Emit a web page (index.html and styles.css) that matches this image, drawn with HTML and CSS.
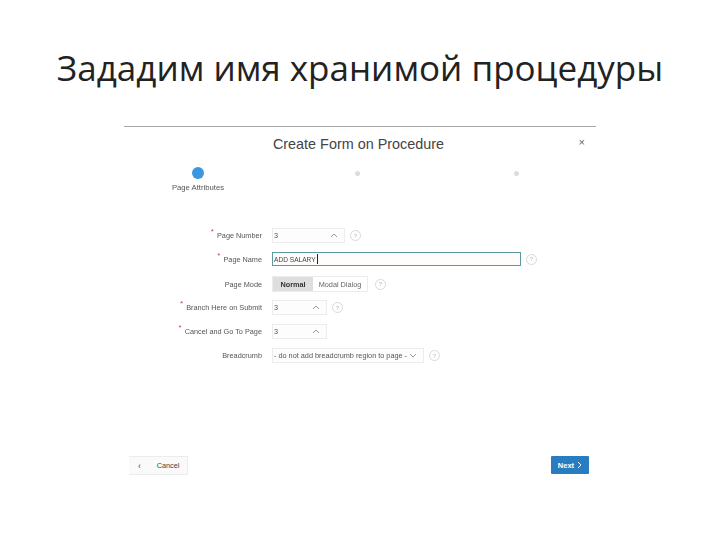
FILE: index.html
```html
<!DOCTYPE html>
<html lang="en">
  <head>
    <meta charset="UTF-8" />
    <title>Зададим имя хранимой процедуры</title>
    <link rel="stylesheet" href="styles.css">
  </head>
  <body>
    <div class="slide">
      <h1 class="slide-title">Зададим имя хранимой процедуры</h1>

      <div class="dialog">
        <div class="dialog-header">
          <div class="dialog-title">Create Form on Procedure</div>
          <div class="dialog-close">×</div>
        </div>

        <div class="wizard">
          <div class="step active">
            <span class="dot"></span>
            <span class="step-label">Page Attributes</span>
          </div>
          <div class="step"><span class="dot"></span></div>
          <div class="step"><span class="dot"></span></div>
        </div>

        <div class="form">
          <div class="row row-number">
            <label class="req">Page Number</label>
            <div class="field w-73">
              <span>3</span>
              <svg class="caret" viewBox="0 0 8 5"><polyline points="1,4 4,1 7,4" /></svg>
            </div>
            <span class="help">?</span>
          </div>
          <div class="row row-name">
            <label class="req">Page Name</label>
            <div class="field input-active w-249"><span>ADD SALARY</span><span class="cursor"></span></div>
            <span class="help">?</span>
          </div>
          <div class="row row-mode">
            <label>Page Mode</label>
            <div class="segmented">
              <span class="seg on">Normal</span>
              <span class="seg">Modal Dialog</span>
            </div>
            <span class="help help-wide">?</span>
          </div>
          <div class="row row-branch">
            <label class="req">Branch Here on Submit</label>
            <div class="field w-55">
              <span>3</span>
              <svg class="caret" viewBox="0 0 8 5"><polyline points="1,4 4,1 7,4" /></svg>
            </div>
            <span class="help">?</span>
          </div>
          <div class="row row-cancel">
            <label class="req">Cancel and Go To Page</label>
            <div class="field w-55">
              <span>3</span>
              <svg class="caret" viewBox="0 0 8 5"><polyline points="1,4 4,1 7,4" /></svg>
            </div>
          </div>
          <div class="row row-crumb">
            <label>Breadcrumb</label>
            <div class="field w-152">
              <span>- do not add breadcrumb region to page -</span>
              <svg class="caret" viewBox="0 0 8 5"><polyline points="1,1 4,4 7,1" /></svg>
            </div>
            <span class="help">?</span>
          </div>
        </div>

        <div class="dialog-footer">
          <div class="btn-group">
            <span class="btn btn-back">‹</span>
            <span class="btn btn-cancel">Cancel</span>
          </div>
          <span class="btn-next">
            Next
            <svg class="next-arrow" viewBox="0 0 5 8"><polyline points="1,1 4,4 1,7" /></svg>
          </span>
        </div>
      </div>
    </div>
  </body>
</html>
```

FILE: styles.css
```css
body {
  margin: 0;
  background: #fff;
  color: #333;
  font-family: "Liberation Sans", Arial, sans-serif;
}
.slide {
  width: 720px;
  height: 540px;
  overflow: hidden;
}
.slide-title {
  margin: 0;
  padding-top: 45px;
  height: 126px;
  box-sizing: border-box;
  text-align: center;
  font-family: "Open Sans", sans-serif;
  font-size: 35px;
  font-weight: 400;
  line-height: 46px;
  color: #222;
  white-space: nowrap;
}
.dialog {
  width: 472px;
  margin-left: 124px;
  border-top: 1px solid #a8a8a8;
}
.dialog-header {
  display: flex;
  justify-content: center;
  align-items: center;
  height: 33px;
  padding-right: 3px;
  position: relative;
}
.dialog-title {
  font-size: 14.4px;
  color: #444;
}
.dialog-close {
  position: absolute;
  right: 11px;
  top: 9px;
  font-size: 11px;
  color: #666;
}
.wizard {
  display: flex;
  justify-content: space-between;
  padding: 7px 77px 0 71px;
  height: 59px;
}
.step {
  width: 6px;
  height: 12px;
  display: flex;
  flex-direction: column;
  align-items: center;
}
.step .dot {
  width: 5px;
  height: 5px;
  margin-top: 4px;
  border-radius: 50%;
  background: #ddd;
  flex: none;
}
.step.active .dot {
  width: 12px;
  height: 12px;
  margin-top: 0;
  background: #3a97e0;
}
.step-label {
  margin-top: 4px;
  font-size: 7.7px;
  line-height: 9px;
  color: #555;
  white-space: nowrap;
  filter: blur(0.3px);
}
.form {
  display: flex;
  flex-direction: column;
  filter: blur(0.3px);
}
.row {
  display: flex;
  align-items: center;
}
.row label {
  width: 148px;
  padding-right: 10px;
  text-align: right;
  font-size: 7.3px;
  color: #555;
  white-space: nowrap;
  box-sizing: border-box;
}
.row-number { height: 15px; margin-top: 2px; }
.row-name { height: 14px; margin-top: 9px; }
.row-mode { height: 16px; margin-top: 10px; }
.row-branch { height: 15px; margin-top: 8px; }
.row-cancel { height: 15px; margin-top: 9px; }
.row-crumb { height: 15px; margin-top: 9px; }
.req::before {
  content: "*";
  position: relative;
  top: -4px;
  margin-right: 3px;
  color: #d04060;
  font-size: 8px;
}
.field {
  height: 100%;
  box-sizing: border-box;
  display: flex;
  justify-content: space-between;
  align-items: center;
  padding: 0 6px 0 1px;
  border: 1px solid #ececec;
  background: #fdfdfd;
  font-size: 7.3px;
  color: #555;
  white-space: nowrap;
}
.w-73 { width: 73px; }
.w-249 { width: 249px; }
.w-55 { width: 55px; }
.w-152 { width: 152px; }
.input-active {
  justify-content: flex-start;
  border-color: #5b9aa0;
  color: #444;
  background: #fffdfb;
  font-size: 6.6px;
}
.cursor {
  width: 1px;
  height: 10px;
  background: #222;
  margin-left: 1px;
}
.caret {
  width: 8px;
  height: 5px;
  fill: none;
  stroke: #999;
  stroke-width: 1;
}
.help {
  display: flex;
  justify-content: center;
  align-items: center;
  width: 9px;
  height: 9px;
  margin-left: 5px;
  border: 1px solid #d8d8d8;
  border-radius: 50%;
  font-size: 6px;
  color: #bbb;
}
.help-wide {
  margin-left: 7px;
}
.segmented {
  display: flex;
  width: 96px;
  height: 100%;
  border: 1px solid #ececec;
  box-sizing: border-box;
  font-size: 7.3px;
  color: #666;
}
.seg {
  flex: 1;
  display: flex;
  justify-content: center;
  align-items: center;
  white-space: nowrap;
}
.seg.on {
  flex: none;
  width: 40px;
  background: #dedede;
  color: #333;
  font-weight: bold;
}
.dialog-footer {
  display: flex;
  justify-content: space-between;
  align-items: flex-start;
  margin-top: 93px;
  padding: 0 7px 0 5px;
}
.btn-group {
  display: flex;
  height: 19px;
  border: 1px solid #ececec;
  border-left: none;
  box-sizing: border-box;
  background: #fafafa;
}
.btn {
  display: flex;
  align-items: center;
  justify-content: center;
  font-size: 7.3px;
  color: #444;
}
.btn-back { width: 21px; font-size: 9px; }
.btn-cancel { width: 37px; padding-right: 1px; box-sizing: border-box; }
.btn-next {
  display: flex;
  align-items: center;
  justify-content: center;
  gap: 3px;
  width: 38px;
  height: 18px;
  background: #2a7cc0;
  border-radius: 1px;
  color: #fff;
  font-size: 7.5px;
  font-weight: bold;
}
.next-arrow {
  width: 5px;
  height: 8px;
  fill: none;
  stroke: #fff;
  stroke-width: 1;
}
```
